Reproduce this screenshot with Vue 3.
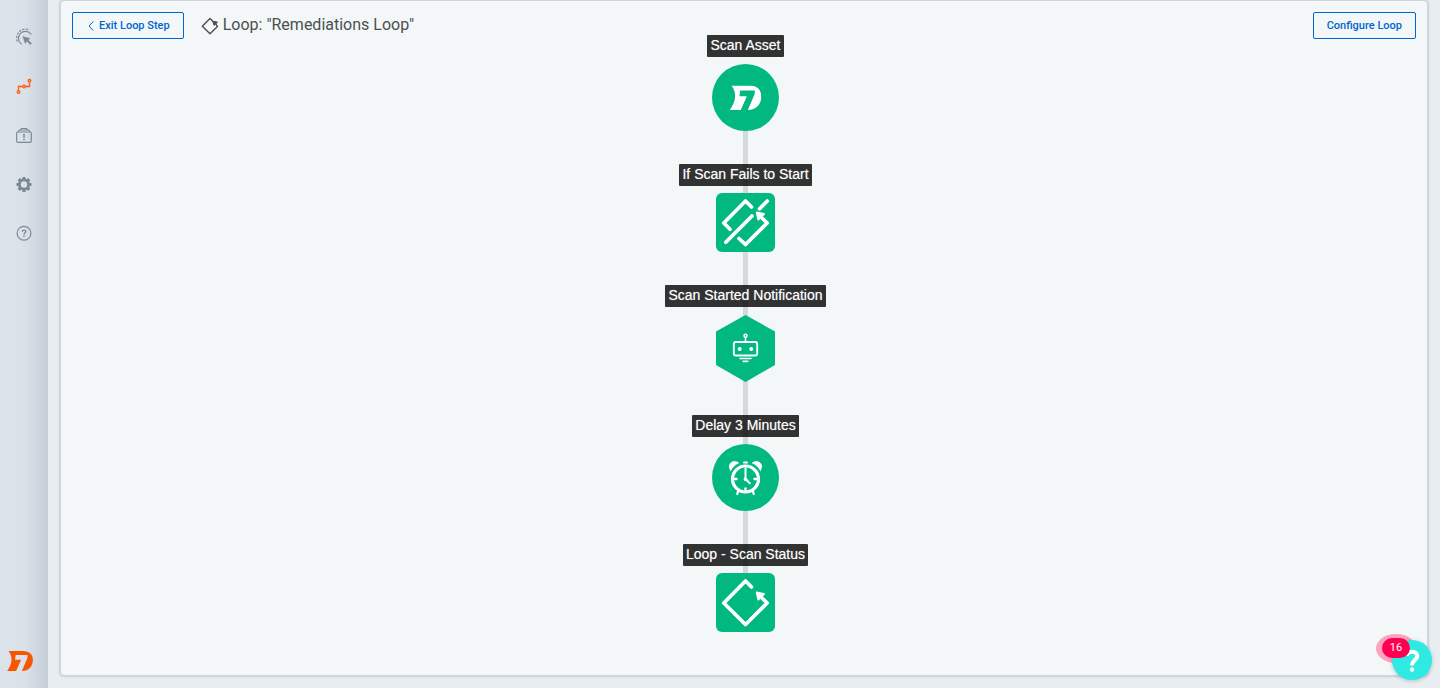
<script setup>
const steps = [
  { label: 'Scan Asset', shape: 'circle', icon: 'brand' },
  { label: 'If Scan Fails to Start', shape: 'square', icon: 'loop-off' },
  { label: 'Scan Started Notification', shape: 'hexagon', icon: 'robot' },
  { label: 'Delay 3 Minutes', shape: 'circle', icon: 'clock' },
  { label: 'Loop - Scan Status', shape: 'square', icon: 'loop' },
]
const brandPath =
  'M5 0H58C82 0 94 13 94 33C94 57 78 73 55 73H0C16 52 24 24 5 0ZM31 15H75L74 26L54 73H33L51 32H29Z'
</script>

<template>
  <div class="app">
    <nav class="sidebar" aria-label="Main">
      <div class="links">
        <a href="#" aria-label="Triggers">
          <svg viewBox="0 0 22 22" fill="none" stroke="#7b8994">
            <path d="M8.600 18.200A7 7 0 1 1 18.300 8.500" stroke-width="1.200" />
            <path d="M4.300 15.500A9 9 0 0 1 16.500 4" stroke-width="1.200" stroke-dasharray="2.200 1.300" />
            <path d="M9.800 10.500L17 12.600L14.900 13.900L18.600 17.200L17.300 18.500L13.700 15.100L12.300 17.600Z" fill="#7b8994" stroke-width="0.500" />
          </svg>
        </a>
        <a href="#" aria-label="Workflows">
          <svg viewBox="0 0 22 22" fill="none" stroke="#f95a0c" stroke-width="1.300">
            <path d="M5.500 15.500V11.500H9.500M12.500 11.500H16.500V7.500" />
            <circle cx="5.500" cy="17" r="1.300" /><circle cx="11" cy="11.500" r="1.300" /><circle cx="16.500" cy="5.800" r="1.300" />
          </svg>
        </a>
        <a href="#" aria-label="Artifacts">
          <svg viewBox="0 0 22 22" fill="none" stroke="#7b8994" stroke-width="1.200">
            <rect x="3.700" y="8" width="14.600" height="10.400" rx="1.200" />
            <path d="M4.800 7.800L6.500 6H15.500L17.200 7.800M7.500 5.800L8.500 4.500H13.500L14.500 5.800" />
            <path d="M11 10V13.800M11 14.800V16.200" stroke-width="1.600" />
          </svg>
        </a>
        <a href="#" aria-label="Settings">
          <svg viewBox="0 0 22 22" fill="none" stroke="#7b8994">
            <circle cx="11" cy="11.500" r="4.600" stroke-width="2.800" />
            <path d="M11 4V7M11 16V19M3.500 11.500H6.500M15.500 11.500H18.500M5.700 6.200L7.500 8M14.500 15L16.300 16.800M16.300 6.200L14.500 8M7.500 15L5.700 16.800" stroke-width="3.200" />
          </svg>
        </a>
        <a href="#" aria-label="Help">
          <svg viewBox="0 0 22 22" fill="none" stroke="#7b8994">
            <circle cx="11" cy="11.300" r="6.900" stroke-width="1.200" />
            <path d="M9.300 9.800C9.300 7.500 12.800 7.600 12.700 9.800C12.600 11 11 11.100 11 12.600M11 13.600V15" stroke-width="1.400" />
          </svg>
        </a>
      </div>
      <a href="#" class="logo" aria-label="Home">
        <svg viewBox="0 0 94 73"><path :d="brandPath" fill="#f75600" fill-rule="evenodd" /></svg>
      </a>
    </nav>

    <main class="panel">
      <header class="toolbar">
        <button type="button" class="btn">
          <svg class="chevron" viewBox="0 0 6 10" fill="none" stroke="currentColor"><path d="M5.300 0.500L1 5L5.300 9.500" /></svg>
          Exit Loop Step
        </button>
        <svg class="title-icon" viewBox="0 0 18 18" fill="none" stroke="#4b4f52" stroke-width="1.400" stroke-linecap="round" stroke-linejoin="round">
          <path d="M11.300 3.700L9 1.500L1.300 9.200L9 16.800L16.500 9.500L15 7.300" />
          <path d="M12 4.500L16 5.300L13.200 8Z" fill="#4b4f52" />
        </svg>
        <h1>Loop: "Remediations Loop"</h1>
        <button type="button" class="btn configure">Configure Loop</button>
      </header>

      <ol class="flow">
        <li v-for="step in steps" :key="step.label" class="step">
          <span class="label">{{ step.label }}</span>
          <svg v-if="step.shape === 'circle'" class="shape circle" viewBox="0 0 67 67">
            <circle cx="33.500" cy="33.500" r="33.500" fill="#02b881" />
            <svg v-if="step.icon === 'brand'" x="17.500" y="21.500" width="32" height="24.500" viewBox="0 0 94 73">
              <path :d="brandPath" fill="#fff" fill-rule="evenodd" />
            </svg>
            <g v-else fill="none" stroke="#fff" stroke-linecap="round">
              <circle cx="33.500" cy="35" r="13" stroke-width="3.200" />
              <path d="M33.500 24.500V35L37.800 39.300" stroke-width="2" />
              <circle cx="33.500" cy="35.300" r="1.400" fill="#fff" stroke-width="1" />
              <path d="M22.500 35H24.500M42.500 35H44.500M33.500 44.500V46" stroke-width="2.400" />
              <path d="M26.300 47L25.200 50M40.700 47L41.800 50" stroke-width="2.200" />
              <path d="M32 18.500H35" stroke-width="2" />
              <path d="M18.600 26.500C14.500 20.500 20.500 14.500 26.800 18.900C23.500 20.300 20.500 23 18.600 26.500ZM48.400 26.500C52.500 20.500 46.500 14.500 40.200 18.900C43.500 20.300 46.500 23 48.400 26.500Z" fill="#fff" stroke-width="0.600" />
            </g>
          </svg>
          <svg v-else-if="step.shape === 'hexagon'" class="shape hexagon" viewBox="0 0 59 68">
            <path d="M29.500 1L59 17.500V51L29.500 68L0 51V17.500Z" fill="#02b881" />
            <g fill="none" stroke="#fff" stroke-width="1.800" stroke-linecap="round">
              <rect x="17.800" y="28" width="23.400" height="13.500" rx="2" />
              <circle cx="29.500" cy="21.800" r="1.500" stroke-width="1.500" />
              <path d="M29.500 24V27.500M24 44.500H35M27.300 47.400H31.700" stroke-width="1.600" />
              <circle cx="23.700" cy="35" r="2" fill="#fff" stroke="none" /><circle cx="35.300" cy="35" r="2" fill="#fff" stroke="none" />
            </g>
          </svg>
          <svg v-else class="shape square" viewBox="0 0 59 59">
            <rect width="59" height="59" rx="6" fill="#02b881" />
            <g fill="none" stroke="#fff" stroke-width="3.700" stroke-linecap="round" stroke-linejoin="round">
              <path v-if="step.icon === 'loop'" d="M35.500 14L29.500 8L7.800 30L29.500 51.500L51.200 30L46 25" />
              <path v-else d="M35.500 14L29.500 8L7.800 30L14 36.200M23 45.500L29.500 51.500L51.200 30L46 25M9.800 49.300L36 23M43.500 15.800L51.300 8" />
              <path d="M40.700 19.500L48 21L42.300 26.700Z" fill="#fff" stroke-width="1.800" />
            </g>
          </svg>
        </li>
      </ol>
    </main>

    <div class="assist">
      <span class="pulse"></span>
      <button type="button" class="assist-btn" aria-label="Open help">
        <svg viewBox="0 0 40 40" fill="none" stroke="#fff" stroke-width="4">
          <path d="M14.800 15.700C15.500 10 25.500 10.500 25.300 16C25.200 20 20 20 20 25.500" />
          <circle cx="20" cy="29.500" r="2.200" fill="#fff" stroke="none" />
        </svg>
      </button>
      <span class="badge">16</span>
    </div>
  </div>
</template>

<style>
body { background: #e8edf1; }
</style>

<style scoped>
* { box-sizing: border-box; }
.app {
  display: flex;
  min-height: 100vh;
  background: #e8edf1;
  font-family: Roboto, "Liberation Sans", sans-serif;
}
.sidebar {
  flex: none;
  width: 48px;
  display: flex;
  flex-direction: column;
  justify-content: space-between;
  align-items: center;
  padding: 26px 0 17px;
  background: linear-gradient(to right, #dce3eb 0%, #dae1e9 50%, #c5ced7 100%);
}
.links { display: flex; flex-direction: column; gap: 27px; }
.links a { display: block; height: 22px; }
.links svg { display: block; width: 22px; height: 22px; }
.logo { padding-right: 8px; }
.logo svg { display: block; width: 26px; height: 20px; }
.panel {
  flex: 1;
  margin: 0 12px 12px;
  border: 1px solid #cfd4d7;
  border-radius: 4px;
  background: #f3f7f8;
  box-shadow: 0 0 3px rgba(0, 0, 0, 0.25);
}
.toolbar {
  display: flex;
  align-items: center;
  height: 34px;
  padding: 15px 11px 0;
}
.btn {
  display: flex;
  align-items: center;
  height: 27px;
  padding: 0 13px;
  border: 1px solid #0066cf;
  border-radius: 2px;
  background: transparent;
  color: #0066cf;
  font: 500 11px/16px Roboto, sans-serif;
  white-space: nowrap;
}
.chevron { width: 6px; height: 10px; margin: 0 5px 0 2px; }
.title-icon { width: 18px; height: 18px; margin: 0 4px 0 17px; }
h1 { margin: 0; padding-bottom: 2px; font-size: 16px; line-height: 20px; font-weight: 400; color: #4b4f52; }
.configure { margin-left: auto; }
.flow {
  display: flex;
  flex-direction: column;
  align-items: center;
  gap: 33px;
  margin: 0;
  padding: 0 0 0 3px;
  list-style: none;
}
.step { position: relative; display: flex; flex-direction: column; align-items: center; gap: 7px; }
.step:not(:last-child)::after {
  content: "";
  position: absolute;
  z-index: 0;
  top: 60px;
  bottom: -70px;
  width: 5px;
  background: #d5d9db;
}
.label {
  position: relative;
  z-index: 1;
  height: 22px;
  padding: 0 3px;
  border-radius: 1px;
  background: rgba(0, 0, 0, 0.8);
  color: #fff;
  font: 14px/21px "Liberation Sans", Arial, sans-serif;
  text-shadow: 0 0 1px rgba(255, 255, 255, 0.5);
  white-space: nowrap;
}
.shape { position: relative; z-index: 1; display: block; }
.circle { width: 67px; height: 67px; }
.square { width: 59px; height: 59px; }
.hexagon { width: 59px; height: 68px; }
.assist { position: fixed; right: 8px; bottom: 8px; width: 40px; height: 40px; }
.pulse {
  position: absolute;
  left: -16px;
  top: -6px;
  width: 40px;
  height: 29px;
  border-radius: 50%;
  background: #fba3bf;
}
.assist-btn {
  position: relative;
  display: block;
  width: 40px;
  height: 40px;
  padding: 0;
  border: 0;
  border-radius: 50%;
  background: #2feae3;
  box-shadow: 0 1px 4px rgba(0, 0, 0, 0.2);
}
.assist-btn svg { display: block; width: 40px; height: 40px; }
.badge {
  position: absolute;
  left: -10px;
  top: -2px;
  width: 28px;
  height: 20px;
  border-radius: 10px;
  background: #ff0051;
  color: #fff;
  font-size: 11px;
  line-height: 20px;
  text-align: center;
}
</style>
